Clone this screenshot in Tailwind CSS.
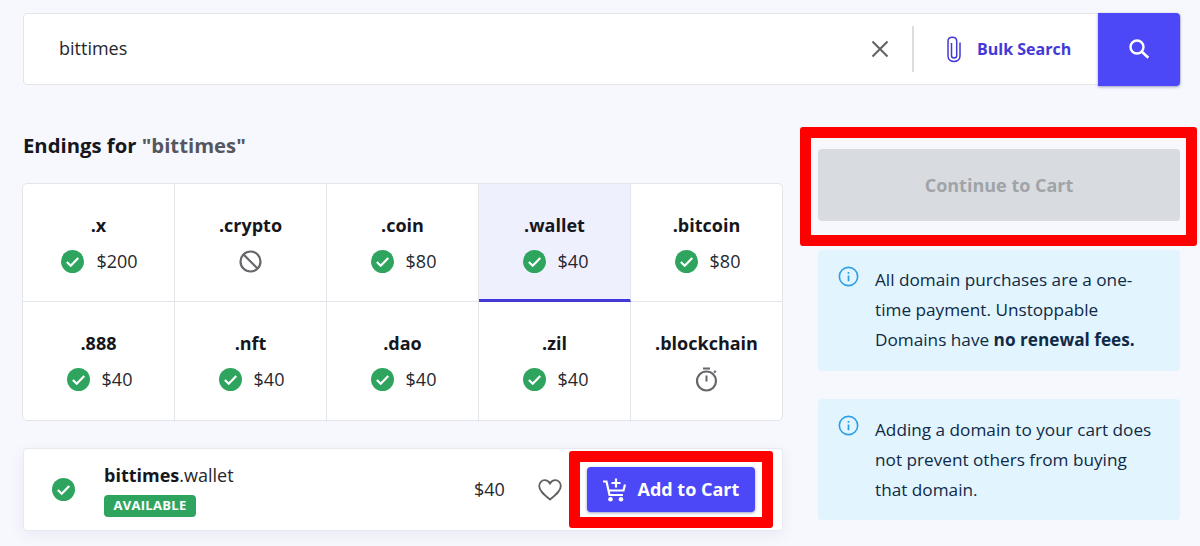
<!DOCTYPE html>
<html lang="en">
<head>
    <meta charset="UTF-8">
    <meta name="viewport" content="width=device-width, initial-scale=1.0">
    <title>Domain Search</title>
    <script src="https://cdn.jsdelivr.net/npm/@tailwindcss/browser@4"></script>
</head>
<body class="relative w-[1200px] h-[546px] overflow-hidden bg-[#f7f8fe] font-['Open_Sans',sans-serif] text-[#15171c]">
    <svg class="hidden">
        <symbol id="ok" viewBox="0 0 22 22">
            <circle cx="11" cy="11" r="11" fill="#2fa45f"/>
            <path d="M5.6 11.4l3.7 3.6 7.2-7.4" fill="none" stroke="#fff" stroke-width="2.1"/>
        </symbol>
        <symbol id="info" viewBox="0 0 22 22">
            <circle cx="11" cy="11" r="9.6" fill="none" stroke="#2a9fe6" stroke-width="1.7"/>
            <path d="M11 10v6M11 6.2v1.9" fill="none" stroke="#2a9fe6" stroke-width="1.8"/>
        </symbol>
    </svg>

    <!-- search bar -->
    <div class="pt-[13px] pl-[23px]">
        <div class="flex items-center h-[72px] w-[1158px] bg-white border border-[#e3e5ea] rounded-[4px]">
            <div class="flex-1 pl-[35px] pb-[2px] text-[18px] text-[#25272c]">bittimes</div>
            <svg class="w-[18px] h-[18px] mr-[23px]" viewBox="0 0 18 18"><path d="M1.5 1.5l15 15M16.5 1.5l-15 15" stroke="#5f6165" stroke-width="2" fill="none"/></svg>
            <div class="w-[2px] h-[46px] bg-[#dcdde0]"></div>
            <div class="flex items-center w-[184px] pl-[32px] gap-[15px]">
                <svg class="w-[16px] h-[27px]" viewBox="0 0 16 27"><path d="M5.500 7v12.500c0 3.400 5.200 3.400 5.200 0V5.200c0-5.200-8.700-5.200-8.700 0V20c0 7.200 12 7.200 12 0V6.500" fill="none" stroke="#4338d8" stroke-width="1.500"/></svg>
                <span class="text-[16px] font-bold text-[#4338d8]">Bulk Search</span>
            </div>
            <div class="flex items-center justify-center w-[82px] h-[73px] bg-[#4c47f7] rounded-r-[4px] shadow-[0_1px_3px_rgba(40,40,120,0.45)]">
                <svg class="w-[22px] h-[22px]" viewBox="0 0 22 22"><circle cx="9" cy="9" r="6.500" fill="none" stroke="#fff" stroke-width="2.400"/><path d="M13.800 13.800l6.500 6" stroke="#fff" stroke-width="2.600" fill="none"/></svg>
            </div>
        </div>
    </div>

    <div class="flex pl-[23px] pr-[20px]">
        <!-- left column -->
        <div class="w-[760px]">
            <h2 class="mt-[45px] h-[31px] leading-[30px] text-[20.300px] font-bold text-[#15171c]">Endings for <span class="text-[#55575e]">"bittimes"</span></h2>
            <div class="grid grid-cols-[152px_152px_152px_152px_151px] mt-[22px] -ml-px w-[761px] h-[238px] grid-rows-[118px_120px] bg-white border border-[#e3e5ea] rounded-[5px]">
                <div class="flex flex-col items-center pt-[29px] border-r border-b border-[#e3e5ea]">
                    <div class="text-[18px] font-bold leading-[25px]">.x</div>
                    <div class="flex items-center gap-[12px] mt-[11px] ml-[2px] h-[25px] text-[18px] text-[#25272c]"><svg class="w-[23px] h-[23px]"><use href="#ok"/></svg>$200</div>
                </div>
                <div class="flex flex-col items-center pt-[29px] border-r border-b border-[#e3e5ea]">
                    <div class="text-[18px] font-bold leading-[25px]">.crypto</div>
                    <div class="flex items-center mt-[11px] h-[25px]">
                        <svg class="w-[23px] h-[23px]" viewBox="0 0 23 23"><circle cx="11.500" cy="11.500" r="10" fill="none" stroke="#65676b" stroke-width="2.200"/><path d="M4.500 4.500l14 14" stroke="#65676b" stroke-width="2.200"/></svg>
                    </div>
                </div>
                <div class="flex flex-col items-center pt-[29px] border-r border-b border-[#e3e5ea]">
                    <div class="text-[18px] font-bold leading-[25px]">.coin</div>
                    <div class="flex items-center gap-[12px] mt-[11px] ml-[2px] h-[25px] text-[18px] text-[#25272c]"><svg class="w-[23px] h-[23px]"><use href="#ok"/></svg>$80</div>
                </div>
                <div class="flex flex-col items-center pt-[29px] border-r border-b-[3px] border-r-[#e3e5ea] border-b-[#4338d8] bg-[#eff0fe]">
                    <div class="text-[18px] font-bold leading-[25px]">.wallet</div>
                    <div class="flex items-center gap-[12px] mt-[11px] ml-[2px] h-[25px] text-[18px] text-[#25272c]"><svg class="w-[23px] h-[23px]"><use href="#ok"/></svg>$40</div>
                </div>
                <div class="flex flex-col items-center pt-[29px] border-b border-[#e3e5ea]">
                    <div class="text-[18px] font-bold leading-[25px]">.bitcoin</div>
                    <div class="flex items-center gap-[12px] mt-[11px] ml-[2px] h-[25px] text-[18px] text-[#25272c]"><svg class="w-[23px] h-[23px]"><use href="#ok"/></svg>$80</div>
                </div>

                <div class="flex flex-col items-center pt-[29px] border-r border-[#e3e5ea]">
                    <div class="text-[18px] font-bold leading-[25px]">.888</div>
                    <div class="flex items-center gap-[12px] mt-[11px] ml-[2px] h-[25px] text-[18px] text-[#25272c]"><svg class="w-[23px] h-[23px]"><use href="#ok"/></svg>$40</div>
                </div>
                <div class="flex flex-col items-center pt-[29px] border-r border-[#e3e5ea]">
                    <div class="text-[18px] font-bold leading-[25px]">.nft</div>
                    <div class="flex items-center gap-[12px] mt-[11px] ml-[2px] h-[25px] text-[18px] text-[#25272c]"><svg class="w-[23px] h-[23px]"><use href="#ok"/></svg>$40</div>
                </div>
                <div class="flex flex-col items-center pt-[29px] border-r border-[#e3e5ea]">
                    <div class="text-[18px] font-bold leading-[25px]">.dao</div>
                    <div class="flex items-center gap-[12px] mt-[11px] ml-[2px] h-[25px] text-[18px] text-[#25272c]"><svg class="w-[23px] h-[23px]"><use href="#ok"/></svg>$40</div>
                </div>
                <div class="flex flex-col items-center pt-[29px] border-r border-[#e3e5ea]">
                    <div class="text-[18px] font-bold leading-[25px]">.zil</div>
                    <div class="flex items-center gap-[12px] mt-[11px] ml-[2px] h-[25px] text-[18px] text-[#25272c]"><svg class="w-[23px] h-[23px]"><use href="#ok"/></svg>$40</div>
                </div>
                <div class="flex flex-col items-center pt-[29px]">
                    <div class="text-[18px] font-bold leading-[25px]">.blockchain</div>
                    <div class="flex items-center mt-[11px] h-[25px]">
                        <svg class="w-[23px] h-[25px]" viewBox="0 0 23 25"><circle cx="11.500" cy="14" r="9.500" fill="none" stroke="#65676b" stroke-width="2.200"/><path d="M8 1.500h7M11.500 8.500v6M19 5.500l1.800-1.600" fill="none" stroke="#65676b" stroke-width="2"/></svg>
                    </div>
                </div>
            </div>

            <!-- selected result -->
            <div class="flex items-center mt-[27px] h-[83px] bg-white border border-[#e8e9ee] rounded-[4px] shadow-[0_4px_14px_rgba(60,70,120,0.08)]">
                <svg class="w-[23px] h-[23px] ml-[28px]"><use href="#ok"/></svg>
                <div class="ml-[29px] w-[370px]">
                    <div class="text-[18px] leading-[25px] text-[#25272c]"><span class="font-bold text-[#15171c]">bittimes</span>.wallet</div>
                    <div class="flex items-center justify-center w-[92px] h-[22px] mt-[7px] rounded-[4px] bg-[#2fa45f] text-[13px] font-bold tracking-[0.3px] text-white">AVAILABLE</div>
                </div>
                <span class="text-[18px] text-[#25272c]">$40</span>
                <svg class="w-[24px] h-[22px] ml-[33px]" viewBox="0 0 24 22"><path d="M12 20.500C5 15 1.200 11.500 1.200 7c0-3.300 2.500-5.800 5.500-5.800 2.200 0 4.200 1.300 5.300 3.300 1.100-2 3.100-3.300 5.300-3.300 3 0 5.500 2.500 5.500 5.800 0 4.500-3.800 8-10.800 13.500z" fill="none" stroke="#5f6165" stroke-width="1.800"/></svg>
                <button class="flex items-center justify-center gap-[11px] w-[168px] h-[45px] ml-[25px] rounded-[4px] bg-[#4c47f7] text-[18px] font-bold text-white shadow-[0_1px_3px_rgba(40,40,120,0.45)]">
                    <svg class="w-[24px] h-[24px]" viewBox="0 0 24 24"><path d="M1 3.500h3.500l3 13.500h13.500M5.800 12.500h15.700l1.500-6M14 0.500v9M9.500 5h9" fill="none" stroke="#fff" stroke-width="2.200"/><circle cx="8.500" cy="21.200" r="2.300" fill="#fff"/><circle cx="19" cy="21.200" r="2.300" fill="#fff"/></svg>
                    Add to Cart
                </button>
            </div>
        </div>

        <!-- right column -->
        <div class="w-[362px] ml-[35px] pt-[64px]">
            <button class="w-full h-[72px] rounded-[4px] bg-[#d8dbdf] text-[18px] font-bold text-[#a0a4a9]">Continue to Cart</button>
            <div class="flex gap-[16px] mt-[29px] h-[121px] pt-[15px] pl-[20px] pr-[30px] rounded-[4px] bg-[#e2f4fd]">
                <svg class="shrink-0 w-[21px] h-[21px] mt-[1px]"><use href="#info"/></svg>
                <p class="text-[17.200px] leading-[30px] text-[#0f2a47]">All domain purchases are a one-time payment. Unstoppable Domains have <b class="font-bold">no renewal fees.</b></p>
            </div>
            <div class="flex gap-[16px] mt-[28px] h-[121px] pt-[16px] pl-[20px] pr-[20px] rounded-[4px] bg-[#e2f4fd]">
                <svg class="shrink-0 w-[21px] h-[21px]"><use href="#info"/></svg>
                <p class="text-[17.200px] leading-[30px] text-[#0f2a47]">Adding a domain to your cart does not prevent others from buying that domain.</p>
            </div>
        </div>
    </div>

    <!-- red annotation boxes drawn over the screenshot -->
    <div class="absolute left-[800px] top-[127px] w-[397px] h-[119px] border-[11px] border-[#fe0000] rounded-[3px]"></div>
    <div class="absolute left-[569px] top-[451px] w-[204px] h-[77px] border-[11px] border-[#fe0000] rounded-[3px]"></div>
</body>
</html>
